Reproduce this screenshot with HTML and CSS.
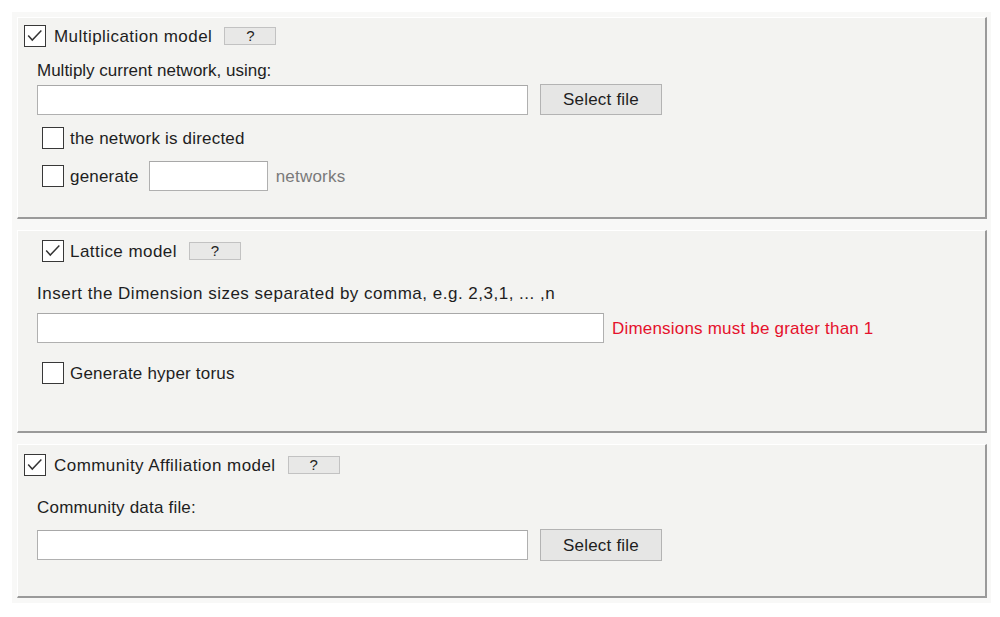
FILE: index.html
```html
<!DOCTYPE html>
<html>
<head>
<meta charset="utf-8">
<link rel="stylesheet" href="styles.css">
</head>
<body>
<div class="outer">
  <section class="panel p1">
    <div class="row head">
      <span class="cb checked"><svg viewBox="0 0 22 22"><polyline points="3.5,10.5 8,15.5 18,5"/></svg></span>
      <span class="txt">Multiplication model</span>
      <span class="help">?</span>
    </div>
    <div class="row lbl l1">Multiply current network, using:</div>
    <div class="row inrow r1">
      <span class="input wide"></span>
      <span class="btn">Select file</span>
    </div>
    <div class="row sub s1">
      <span class="cb"></span>
      <span class="txt">the network is directed</span>
    </div>
    <div class="row sub s2">
      <span class="cb"></span>
      <span class="txt gen">generate</span>
      <span class="input small"></span>
      <span class="muted">networks</span>
    </div>
  </section>

  <section class="panel p2">
    <div class="row sub head2">
      <span class="cb checked"><svg viewBox="0 0 22 22"><polyline points="3.5,10.5 8,15.5 18,5"/></svg></span>
      <span class="txt">Lattice model</span>
      <span class="help">?</span>
    </div>
    <div class="row lbl l2 spread">Insert the Dimension sizes separated by comma, e.g. 2,3,1, ... ,n</div>
    <div class="row inrow r2">
      <span class="input long"></span>
      <span class="err">Dimensions must be grater than 1</span>
    </div>
    <div class="row sub s3">
      <span class="cb"></span>
      <span class="txt">Generate hyper torus</span>
    </div>
  </section>

  <section class="panel p3">
    <div class="row head head3">
      <span class="cb checked"><svg viewBox="0 0 22 22"><polyline points="3.5,10.5 8,15.5 18,5"/></svg></span>
      <span class="txt">Community Affiliation model</span>
      <span class="help">?</span>
    </div>
    <div class="row lbl l3">Community data file:</div>
    <div class="row inrow r3">
      <span class="input wide"></span>
      <span class="btn">Select file</span>
    </div>
  </section>
</div>
</body>
</html>
```

FILE: styles.css
```css
* { box-sizing: border-box; }
html, body { margin: 0; padding: 0; background: #ffffff; }
body {
  font-family: "Liberation Sans", Arial, sans-serif;
  font-size: 17px;
  letter-spacing: 0.2px;
  color: #1e1e1e;
}
.outer {
  margin: 12px 0 0 12px;
  width: 979px;
  background: #f8f8f7;
  padding: 5px 4px 5px 5px;
  display: flex;
  flex-direction: column;
  gap: 11px;
}
.panel {
  background: #f3f3f1;
  border-top: 1px solid #ffffff;
  border-left: 1px solid #ffffff;
  border-right: 2px solid #9a9a9a;
  border-bottom: 2px solid #9a9a9a;
  padding-left: 19px;
  display: flex;
  flex-direction: column;
}
.p1 { height: 202px; }
.p2 { height: 203px; }
.p3 { height: 154px; }

.row { display: flex; align-items: center; }
.head { margin-left: -13px; height: 22px; }
.sub { margin-left: 5px; height: 22px; }
.p1 .head { margin-top: 7px; }
.head2 { margin-top: 9px; }
.head3 { margin-top: 9px; }
.head .txt, .head2 .txt { letter-spacing: 0.45px; }

.lbl { height: 18px; line-height: 18px; }
.l1 { margin-top: 15px; letter-spacing: 0px; }
.l2 { margin-top: 23px; }
.l3 { margin-top: 23px; }
.spread { letter-spacing: 0.5px; }

.r1 { margin-top: 4px; height: 31px; }
.r2 { margin-top: 10px; height: 30px; }
.r3 { margin-top: 12px; height: 32px; }

.s1 { margin-top: 12px; }
.s2 { margin-top: 12px; height: 30px; }
.s3 { margin-top: 19px; }

.txt, .muted, .err { padding-top: 2px; }

.cb {
  width: 22px;
  height: 22px;
  flex: none;
  border: 1.5px solid #383838;
  background: #ffffff;
  display: inline-flex;
  align-items: center;
  justify-content: center;
}
.cb svg { width: 20px; height: 20px; }
.cb polyline { fill: none; stroke: #333333; stroke-width: 1.6; }
.txt { margin-left: 7px; white-space: nowrap; }
.head .txt { margin-left: 8px; }
.sub .txt { margin-left: 6px; }
.help {
  margin-left: 12px;
  width: 52px;
  height: 18px;
  background: #e8e8e7;
  border: 1px solid #c2c2c2;
  font-size: 15px;
  line-height: 16px;
  text-align: center;
  color: #222;
  letter-spacing: 0;
}
.input {
  display: block;
  background: #ffffff;
  border: 1px solid #b0b0b0;
  border-top-color: #a8a8a8;
  height: 30px;
  flex: none;
}
.wide { width: 491px; }
.long { width: 567px; }
.small { width: 119px; margin-left: 10px; }
.btn {
  margin-left: 12px;
  width: 122px;
  height: 31px;
  background: #e6e6e5;
  border: 1px solid #b3b3b3;
  display: inline-flex;
  align-items: center;
  justify-content: center;
  color: #1e1e1e;
  padding-top: 1px;
}
.r3 .btn { height: 32px; }
.muted { margin-left: 8px; color: #7a7a7a; }
.err { margin-left: 8px; color: #e5112c; }
```
